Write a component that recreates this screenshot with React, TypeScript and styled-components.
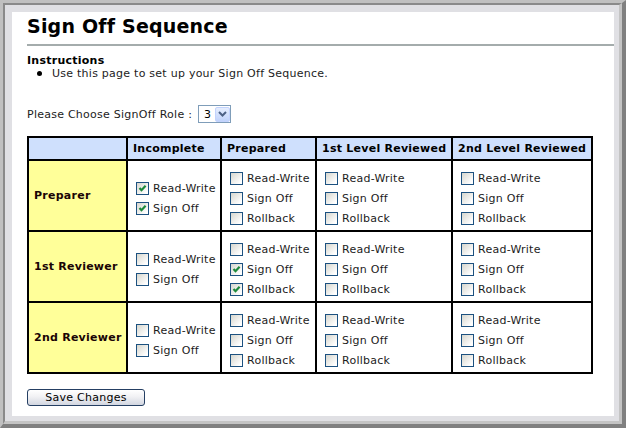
import React, {FC} from 'react';
import styled, {createGlobalStyle} from 'styled-components';

const GlobalStyle = createGlobalStyle`
  body {
    margin: 0;
    font-family: "DejaVu Sans", Verdana, sans-serif;
    font-size: 11px;
    letter-spacing: 0.25px;
    color: #1c1c1c;
  }
`;

type Access = 'rw' | 'so' | 'rb';

interface Role {
  name: string;
  cells: {options: Access[]; checked: Access[]}[];
}

const labels: Record<Access, string> = {
  rw: 'Read-Write',
  so: 'Sign Off',
  rb: 'Rollback',
};

const all: Access[] = ['rw', 'so', 'rb'];

const columns = [
  {title: '', width: 99},
  {title: 'Incomplete', width: 94},
  {title: 'Prepared', width: 95},
  {title: '1st Level Reviewed', width: 136},
  {title: '2nd Level Reviewed', width: 140},
];

const roles: Role[] = [
  {
    name: 'Preparer',
    cells: [
      {options: ['rw', 'so'], checked: ['rw', 'so']},
      {options: all, checked: []},
      {options: all, checked: []},
      {options: all, checked: []},
    ],
  },
  {
    name: '1st Reviewer',
    cells: [
      {options: ['rw', 'so'], checked: []},
      {options: all, checked: ['so', 'rb']},
      {options: all, checked: []},
      {options: all, checked: []},
    ],
  },
  {
    name: '2nd Reviewer',
    cells: [
      {options: ['rw', 'so'], checked: []},
      {options: all, checked: []},
      {options: all, checked: []},
      {options: all, checked: []},
    ],
  },
];

const Frame = styled.div`
  box-sizing: border-box;
  width: 626px;
  height: 428px;
  display: flex;
  border-style: solid;
  border-width: 3px 4px 4px 3px;
  border-color: #c0c0c0 #808080 #808080 #c0c0c0;
`;

const Bevel = styled.div`
  flex: 1;
  display: flex;
  border-style: solid;
  border-width: 2px 3px 3px 2px;
  border-color: #8a8a8a #c4c4c4 #c4c4c4 #8a8a8a;
  background: #e0e0e4;
  padding: 7px 5px 5px 7px;
`;

const Panel = styled.div`
  flex: 1;
  background: #fff;
  padding: 3px 0 0 15px;
`;

const Title = styled.h1`
  margin: 0;
  font-size: 19px;
  line-height: 22px;
  letter-spacing: 0.2px;
  font-weight: bold;
  color: #000;
`;

const Rule = styled.div`
  margin-top: 7px;
  height: 2px;
  background: #a4acac;
`;

const Heading = styled.div`
  margin-top: 8px;
  font-weight: bold;
  line-height: 13px;
  color: #000;
`;

const Bullet = styled.div`
  display: flex;
  align-items: center;
  line-height: 13px;
  gap: 10px;
  padding-left: 10px;
`;

const Dot = styled.span`
  width: 5px;
  height: 5px;
  border-radius: 50%;
  background: #000;
`;

const RoleRow = styled.div`
  margin-top: 25px;
  display: flex;
  align-items: center;
  gap: 6px;
  height: 18px;
`;

const SelectBox = styled.div`
  box-sizing: border-box;
  width: 33px;
  height: 18px;
  border: 1px solid #7f9db9;
  display: flex;
  align-items: center;
`;

const SelectValue = styled.span`
  flex: 1;
  padding-left: 5px;
  color: #000;
`;

const SelectButton = styled.span`
  box-sizing: border-box;
  width: 15px;
  height: 15px;
  display: flex;
  align-items: center;
  justify-content: center;
  border: 1px solid #c3d3fd;
  border-radius: 2px;
  background: linear-gradient(#e6eefe, #c1d3fb);
`;

const Grid = styled.table`
  margin-top: 13px;
  table-layout: fixed;
  width: 566px;
  border-collapse: separate;
  border-spacing: 0;
  border-top: 2px solid #000;
  border-left: 2px solid #000;
`;

const Col = styled.col<{$w: number}>`
  width: ${p => p.$w}px;
`;

const Head = styled.th`
  box-sizing: border-box;
  height: 23px;
  padding: 0 0 0 5px;
  text-align: left;
  font-weight: bold;
  color: #000;
  background: #cfe0fd;
  border-right: 2px solid #000;
  border-bottom: 2px solid #000;
  white-space: nowrap;
`;

const RoleCell = styled.th`
  box-sizing: border-box;
  height: 71px;
  padding: 0 0 0 5px;
  text-align: left;
  font-weight: bold;
  color: #1a0505;
  background: #ffff99;
  border-right: 2px solid #000;
  border-bottom: 2px solid #000;
`;

const Cell = styled.td`
  box-sizing: border-box;
  height: 71px;
  padding: 5px 0 0 8px;
  vertical-align: middle;
  border-right: 2px solid #000;
  border-bottom: 2px solid #000;
`;

const Option = styled.label`
  display: flex;
  align-items: center;
  gap: 4px;
  height: 20px;
  white-space: nowrap;
`;

const Box = styled.span`
  box-sizing: border-box;
  width: 13px;
  height: 13px;
  border: 1px solid #1c5180;
  background: linear-gradient(135deg, #d6d6ce, #ffffff 85%);
  display: flex;
  align-items: center;
  justify-content: center;
`;

const SaveButton = styled.button`
  box-sizing: border-box;
  margin-top: 15px;
  width: 118px;
  height: 17px;
  padding: 0;
  border: 1px solid #253f63;
  border-radius: 3px;
  background: linear-gradient(#ffffff, #f1f1f4 45%, #d2d6e0);
  font-family: "DejaVu Sans", Verdana, sans-serif;
  font-size: 11px;
  letter-spacing: 0.25px;
  color: #000;
  line-height: 15px;
`;

const Check: FC<{on: boolean}> = ({on}) => (
  <Box>
    {on && (
      <svg width="11" height="11" viewBox="0 0 11 11">
        <polyline
          points="2.5,5 4.5,7.2 8.6,2.8"
          fill="none"
          stroke="#1f8a3c"
          strokeWidth="2.2"
        />
      </svg>
    )}
  </Box>
);

const App: FC = () => (
  <>
    <GlobalStyle />
    <Frame>
      <Bevel>
        <Panel>
          <Title>Sign Off Sequence</Title>
          <Rule />
          <Heading>Instructions</Heading>
          <Bullet>
            <Dot />
            <span>Use this page to set up your Sign Off Sequence.</span>
          </Bullet>
          <RoleRow>
            <span>Please Choose SignOff Role :</span>
            <SelectBox>
              <SelectValue>3</SelectValue>
              <SelectButton>
                <svg width="9" height="6" viewBox="0 0 9 6">
                  <polyline
                    points="1,1 4.5,4.5 8,1"
                    fill="none"
                    stroke="#4d6185"
                    strokeWidth="2"
                  />
                </svg>
              </SelectButton>
            </SelectBox>
          </RoleRow>
          <Grid>
            <colgroup>
              {columns.map((c, i) => (
                <Col key={i} $w={c.width} />
              ))}
            </colgroup>
            <thead>
              <tr>
                {columns.map((c, i) => (
                  <Head key={i}>{c.title}</Head>
                ))}
              </tr>
            </thead>
            <tbody>
              {roles.map(role => (
                <tr key={role.name}>
                  <RoleCell>{role.name}</RoleCell>
                  {role.cells.map((cell, i) => (
                    <Cell key={i}>
                      {cell.options.map(o => (
                        <Option key={o}>
                          <Check on={cell.checked.includes(o)} />
                          {labels[o]}
                        </Option>
                      ))}
                    </Cell>
                  ))}
                </tr>
              ))}
            </tbody>
          </Grid>
          <SaveButton>Save Changes</SaveButton>
        </Panel>
      </Bevel>
    </Frame>
  </>
);

export default App;
